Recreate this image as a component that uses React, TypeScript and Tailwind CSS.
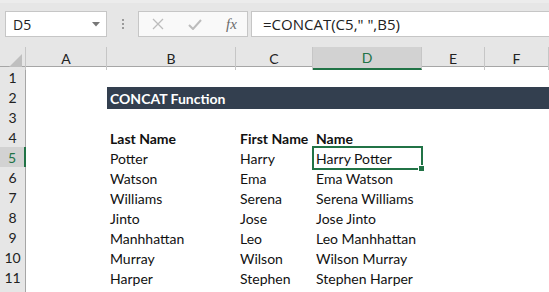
import React from 'react';

const cols = ['A', 'B', 'C', 'D', 'E', 'F'];

const rows: { b?: string; c?: string; d?: string; bold?: boolean; title?: boolean }[] = [
    {},
    { title: true },
    {},
    { b: 'Last Name', c: 'First Name', d: 'Name', bold: true },
    { b: 'Potter', c: 'Harry', d: 'Harry Potter' },
    { b: 'Watson', c: 'Ema', d: 'Ema Watson' },
    { b: 'Williams', c: 'Serena', d: 'Serena Williams' },
    { b: 'Jinto', c: 'Jose', d: 'Jose Jinto' },
    { b: 'Manhhattan', c: 'Leo', d: 'Leo Manhhattan' },
    { b: 'Murray', c: 'Wilson', d: 'Wilson Murray' },
    { b: 'Harper', c: 'Stephen', d: 'Stephen Harper' },
    {},
];

const gridCols = 'grid grid-cols-[26px_81px_129px_77px_109px_63px_1fr]';

const FormulaBar = () => (
    <div className="h-[47px] bg-[#e6e6e6] border-t-[3px] border-[#ececec] flex items-start pt-[8px] pl-[5px] gap-0">
        <div className="w-[102px] h-[26px] bg-white border border-[#c6c6c6] flex items-center justify-between pl-[7px] pr-[6px] text-[14px] text-[#222] font-['Open_Sans',sans-serif]">
            <span>D5</span>
            <svg width="8" height="5" viewBox="0 0 8 5"><path d="M0 0h8L4 4.5z" fill="#777" /></svg>
        </div>
        <div className="w-[31px] h-[26px] flex flex-col items-center justify-center gap-[2px]">
            <span className="w-[2px] h-[2px] bg-[#9a9a9a]" />
            <span className="w-[2px] h-[2px] bg-[#9a9a9a]" />
            <span className="w-[2px] h-[2px] bg-[#9a9a9a]" />
        </div>
        <div className="w-[110px] h-[26px] bg-[#f9f9f9] border border-[#c6c6c6] flex items-center pl-[13px] gap-[24px]">
            <svg width="12" height="12" viewBox="0 0 12 12"><path d="M1 1l10 10M11 1L1 11" stroke="#bcbcbc" strokeWidth="1.3" fill="none" /></svg>
            <svg width="14" height="11" viewBox="0 0 14 11"><path d="M1 6l4 4L13 1" stroke="#bcbcbc" strokeWidth="2" fill="none" /></svg>
            <span className="text-[15px] italic text-[#6b6b6b] font-['Liberation_Serif',serif] leading-none">fx</span>
        </div>
        <div className="ml-[3px] flex-1 h-[26px] bg-white border-y border-l border-[#c6c6c6] flex items-center pl-[11px] text-[15px] text-[#222] font-['Open_Sans',sans-serif]">
            =CONCAT(C5," ",B5)
        </div>
    </div>
);

const ColumnHeaders = () => (
    <div className={`${gridCols} h-[20px] bg-[#e6e6e6] border-b border-[#a6a6a6] font-['Lato',sans-serif] text-[14px] text-[#222]`}>
        <div className="relative border-r border-[#c6c6c6]">
            <svg className="absolute right-[3px] bottom-[3px]" width="13" height="13" viewBox="0 0 13 13"><path d="M13 0v13H0z" fill="#bfbfbf" /></svg>
        </div>
        {cols.map(c => (
            <div
                key={c}
                className={`flex items-center justify-center border-r border-[#c6c6c6] ${c === 'D' ? 'bg-[#d2d2d2] text-[#217346] border-b-2 border-b-[#217346]' : ''}`}
            >
                {c}
            </div>
        ))}
    </div>
);

export default function App() {
    return (
        <div className="w-[549px] h-[292px] overflow-hidden bg-white">
            <FormulaBar />
            <ColumnHeaders />
            <div className="font-['Lato',sans-serif] text-[14px] text-[#111]">
                {rows.map((r, i) => {
                    const n = i + 1;
                    const sel = n === 5;
                    return (
                        <div key={n} className={`${gridCols} h-[20px]`}>
                            <div className={`flex items-center justify-center border-b border-[#c6c6c6] text-[14px] text-[#222] ${sel ? 'bg-[#d2d2d2] text-[#217346] border-r-2 border-r-[#217346]' : 'bg-[#e6e6e6] border-r border-r-[#a6a6a6]'}`}>
                                {n < 12 ? n : ''}
                            </div>
                            <div />
                            {r.title ? (
                                <div className="col-span-5 bg-[#333f4f] text-white font-bold text-[14px] flex items-center pl-[3px]">
                                    CONCAT Function
                                </div>
                            ) : (
                                <>
                                    <div className={`flex items-center pl-[3px] ${r.bold ? 'font-bold' : ''}`}>{r.b}</div>
                                    <div className={`flex items-center pl-[4px] whitespace-nowrap ${r.bold ? 'font-bold' : ''}`}>{r.c}</div>
                                    <div className={`relative flex items-center pl-[3px] whitespace-nowrap ${r.bold ? 'font-bold' : ''}`}>
                                        {sel && (
                                            <>
                                                <span className="absolute -left-[1px] -top-[1px] -right-[1px] bottom-[-1px] border-2 border-[#217346]" />
                                                <span className="absolute right-[-3px] bottom-[-3px] w-[5px] h-[5px] bg-[#217346] border border-white box-content" />
                                            </>
                                        )}
                                        {r.d}
                                    </div>
                                    <div />
                                    <div />
                                </>
                            )}
                        </div>
                    );
                })}
            </div>
        </div>
    );
}
